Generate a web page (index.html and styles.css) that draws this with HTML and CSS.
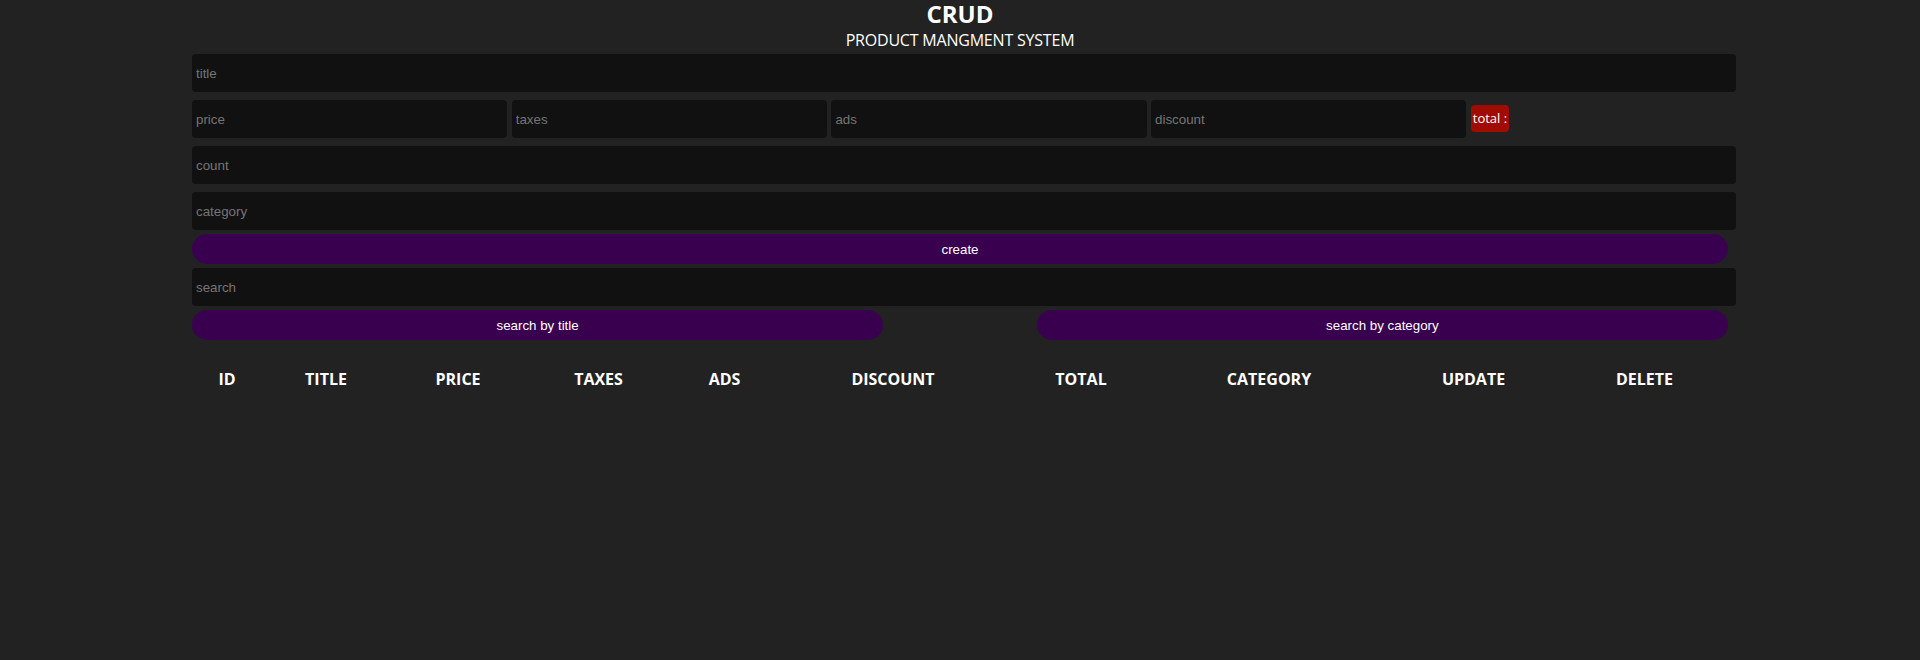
FILE: index.html
```html
<!DOCTYPE html>
<html lang="en">
<head>
<meta charset="UTF-8">
<title>CRUD</title>
<link rel="stylesheet" href="styles.css">
</head>
<body>
<div class="crud">
  <div class="head">
    <h2 class="head-title">CRUD</h2>
    <p class="head-sub">PRODUCT MANGMENT SYSTEM</p>
  </div>
  <input class="field" type="text" placeholder="title">
  <div class="price">
    <input class="field field-price" type="number" placeholder="price">
    <input class="field field-price" type="number" placeholder="taxes">
    <input class="field field-price" type="number" placeholder="ads">
    <input class="field field-price" type="number" placeholder="discount">
    <small class="total">total :</small>
  </div>
  <input class="field" type="number" placeholder="count">
  <input class="field" type="text" placeholder="category">
  <button class="btn btn-full">create</button>
  <input class="field" type="text" placeholder="search">
  <div class="search-btns">
    <button class="btn btn-half">search by title</button>
    <button class="btn btn-half">search by category</button>
  </div>
  <table class="list">
    <thead>
      <tr>
        <th class="c-id">ID</th>
        <th class="c-title">TITLE</th>
        <th class="c-price">PRICE</th>
        <th class="c-taxes">TAXES</th>
        <th class="c-ads">ADS</th>
        <th class="c-discount">DISCOUNT</th>
        <th class="c-total">TOTAL</th>
        <th class="c-category">CATEGORY</th>
        <th class="c-update">UPDATE</th>
        <th class="c-delete">DELETE</th>
      </tr>
    </thead>
    <tbody></tbody>
  </table>
</div>
</body>
</html>
```
FILE: styles.css
```css
* {
  box-sizing: border-box;
}

html, body {
  margin: 0;
  padding: 0;
  background: #222222;
  color: #ffffff;
  font-family: "Open Sans", "Noto Sans", sans-serif;
}

body {
  height: 660px;
  overflow: hidden;
}

.crud {
  width: 80%;
  margin: 0 auto;
  display: flex;
  flex-direction: column;
  align-items: flex-start;
}

.head {
  width: 100%;
  height: 50px;
  text-align: center;
}

.head-title {
  margin: 0;
  font-size: 24px;
  font-weight: 700;
  line-height: 28px;
}

.head-sub {
  margin: 3px 0 0;
  font-size: 16px;
  font-weight: 400;
  line-height: 19px;
  letter-spacing: -0.2px;
}

.field {
  display: block;
  width: calc(100% + 8px);
  height: 38px;
  margin: 4px 0;
  padding: 0 4px;
  border: none;
  border-radius: 4px;
  outline: none;
  background: #111111;
  color: #ffffff;
  font-family: "Liberation Sans", Arial, sans-serif;
  font-size: 13.33px;
}

.field::placeholder {
  color: #757575;
}

.field::-webkit-outer-spin-button,
.field::-webkit-inner-spin-button {
  -webkit-appearance: none;
  margin: 0;
}

.price {
  width: 100%;
  display: flex;
  align-items: center;
  gap: 4.5px;
  margin: 4px 0;
}

.field-price {
  width: calc(20% + 8px);
  flex: 0 0 auto;
  margin: 0;
}

.total {
  display: inline-block;
  height: 27px;
  padding: 4px 2px;
  margin-top: -1px;
  border-radius: 4px;
  background: #a00c02;
  color: #ffffff;
  font-size: 13px;
  line-height: 19px;
}

.btn {
  height: 30px;
  border: none;
  border-radius: 15px;
  background: #3a0050;
  color: #ffffff;
  font-family: "Liberation Sans", Arial, sans-serif;
  font-size: 13.33px;
  cursor: pointer;
  padding: 0;
}

.btn-full {
  width: 100%;
}

.search-btns {
  width: 100%;
  display: flex;
  justify-content: space-between;
}

.btn-half {
  width: 45%;
}

.list {
  width: 100%;
  margin-top: 25px;
  table-layout: fixed;
  border-spacing: 2px;
  text-align: center;
}

.list th {
  padding: 1px 0;
  font-size: 16px;
  font-weight: 700;
  line-height: 22px;
  text-transform: uppercase;
  color: #ffffff;
}

.c-id { width: 66px; }
.c-title { width: 128px; }
.c-price { width: 132px; }
.c-taxes { width: 145px; }
.c-ads { width: 103px; }
.c-discount { width: 230px; }
.c-total { width: 142px; }
.c-category { width: 230px; }
.c-update { width: 175px; }
.c-delete { width: 163px; }
```
